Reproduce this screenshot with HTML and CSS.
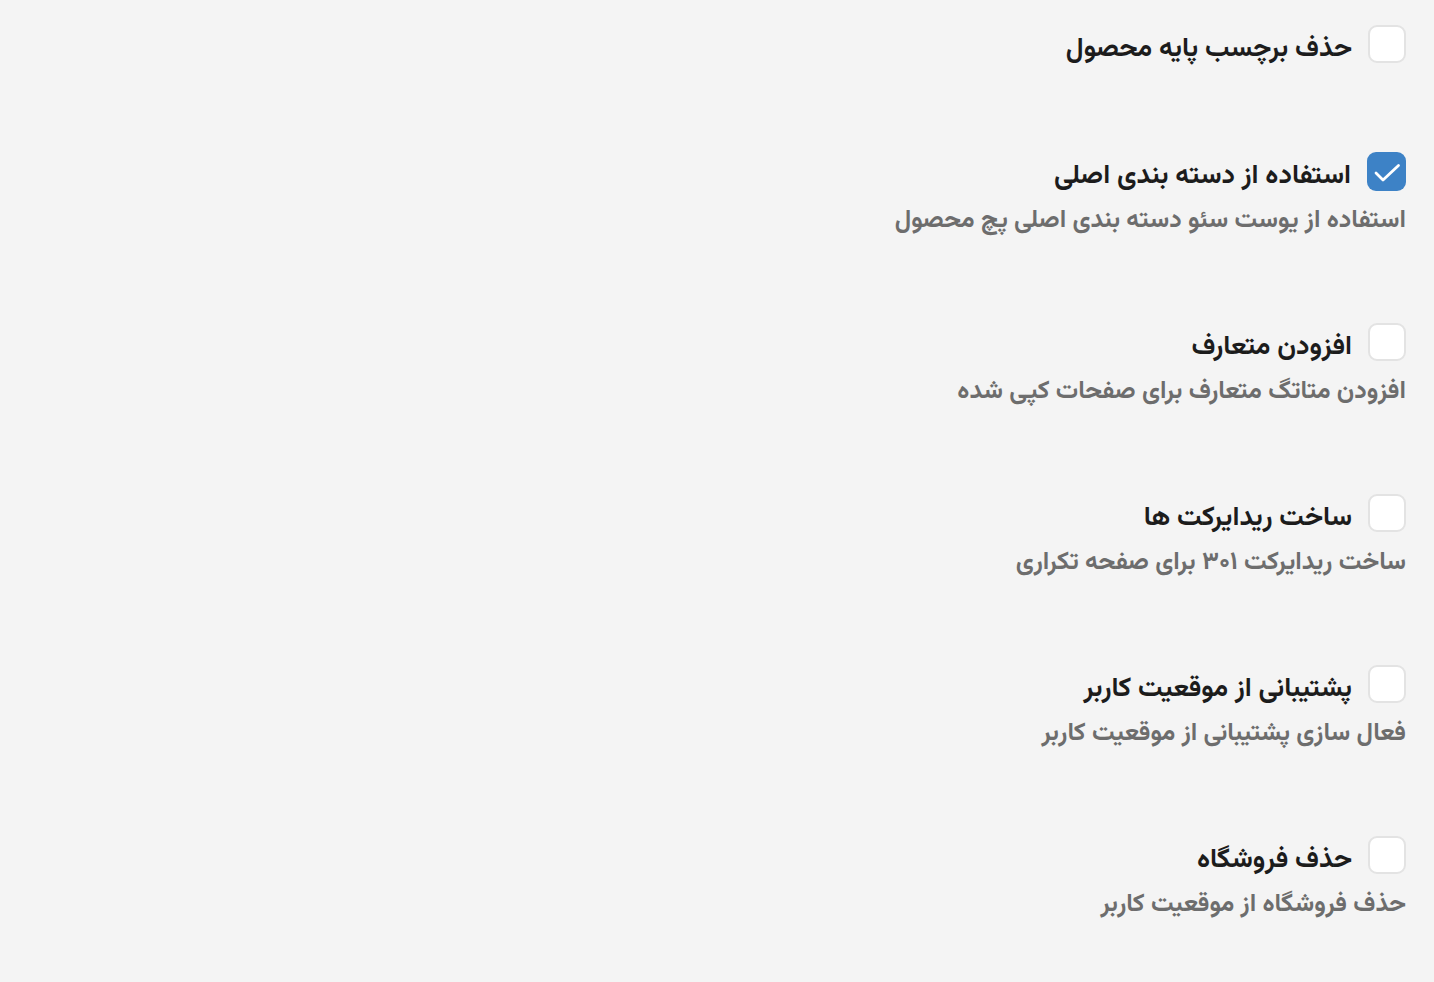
FILE: index.html
```html
<!DOCTYPE html>
<html lang="fa" dir="rtl">
<head>
<meta charset="utf-8">
<link rel="stylesheet" href="styles.css">
</head>
<body>
<div class="settings">
  <div class="item">
    <div class="row">
      <span class="box"></span>
      <span class="title">حذف برچسب پایه محصول</span>
    </div>
  </div>
  <div class="item">
    <div class="row">
      <span class="box checked"><svg class="check" viewBox="0 0 38 38" width="38" height="38"><path d="M8 21l7 7L30.5 13.5" fill="none" stroke="#fff" stroke-width="2.8" stroke-linecap="round" stroke-linejoin="round"/></svg></span>
      <span class="title">استفاده از دسته بندی اصلی</span>
    </div>
    <div class="desc">استفاده از یوست سئو دسته بندی اصلی پچ محصول</div>
  </div>
  <div class="item">
    <div class="row">
      <span class="box"></span>
      <span class="title">افزودن متعارف</span>
    </div>
    <div class="desc">افزودن متاتگ متعارف برای صفحات کپی شده</div>
  </div>
  <div class="item">
    <div class="row">
      <span class="box"></span>
      <span class="title">ساخت ریدایرکت ها</span>
    </div>
    <div class="desc">ساخت ریدایرکت ۳۰۱ برای صفحه تکراری</div>
  </div>
  <div class="item">
    <div class="row">
      <span class="box"></span>
      <span class="title">پشتیبانی از موقعیت کاربر</span>
    </div>
    <div class="desc">فعال سازی پشتیبانی از موقعیت کاربر</div>
  </div>
  <div class="item">
    <div class="row">
      <span class="box"></span>
      <span class="title">حذف فروشگاه</span>
    </div>
    <div class="desc">حذف فروشگاه از موقعیت کاربر</div>
  </div>
</div>
</body>
</html>
```
FILE: styles.css
```css
html, body {
  margin: 0;
  padding: 0;
  background: #f4f4f4;
}
body {
  font-family: "Vazirmatn", "DejaVu Sans", "Noto Sans", sans-serif;
  direction: rtl;
}
.settings {
  padding: 25px 28px 0 28px;
  display: flex;
  flex-direction: column;
  gap: 84px;
}
.item {
  display: flex;
  flex-direction: column;
  align-items: flex-start;
}
.item:first-child {
  margin-bottom: 5px;
}
.row {
  display: flex;
  align-items: center;
  gap: 16px;
  height: 38px;
}
.box {
  box-sizing: border-box;
  width: 38px;
  height: 38px;
  border: 2px solid #e3e3e3;
  border-radius: 9px;
  background: #ffffff;
  display: flex;
  align-items: center;
  justify-content: center;
  flex-shrink: 0;
}
.box.checked {
  width: 39px;
  height: 39px;
  border: none;
  background: #3d82c6;
}
.check {
  display: block;
}
.title {
  font-size: 27px;
  font-weight: 700;
  color: #1c1c1c;
  line-height: 38px;
  padding-top: 11px;
}
.desc {
  margin-top: 13px;
  font-size: 25px;
  font-weight: 700;
  color: #6d6d6d;
  line-height: 36px;
}
```
